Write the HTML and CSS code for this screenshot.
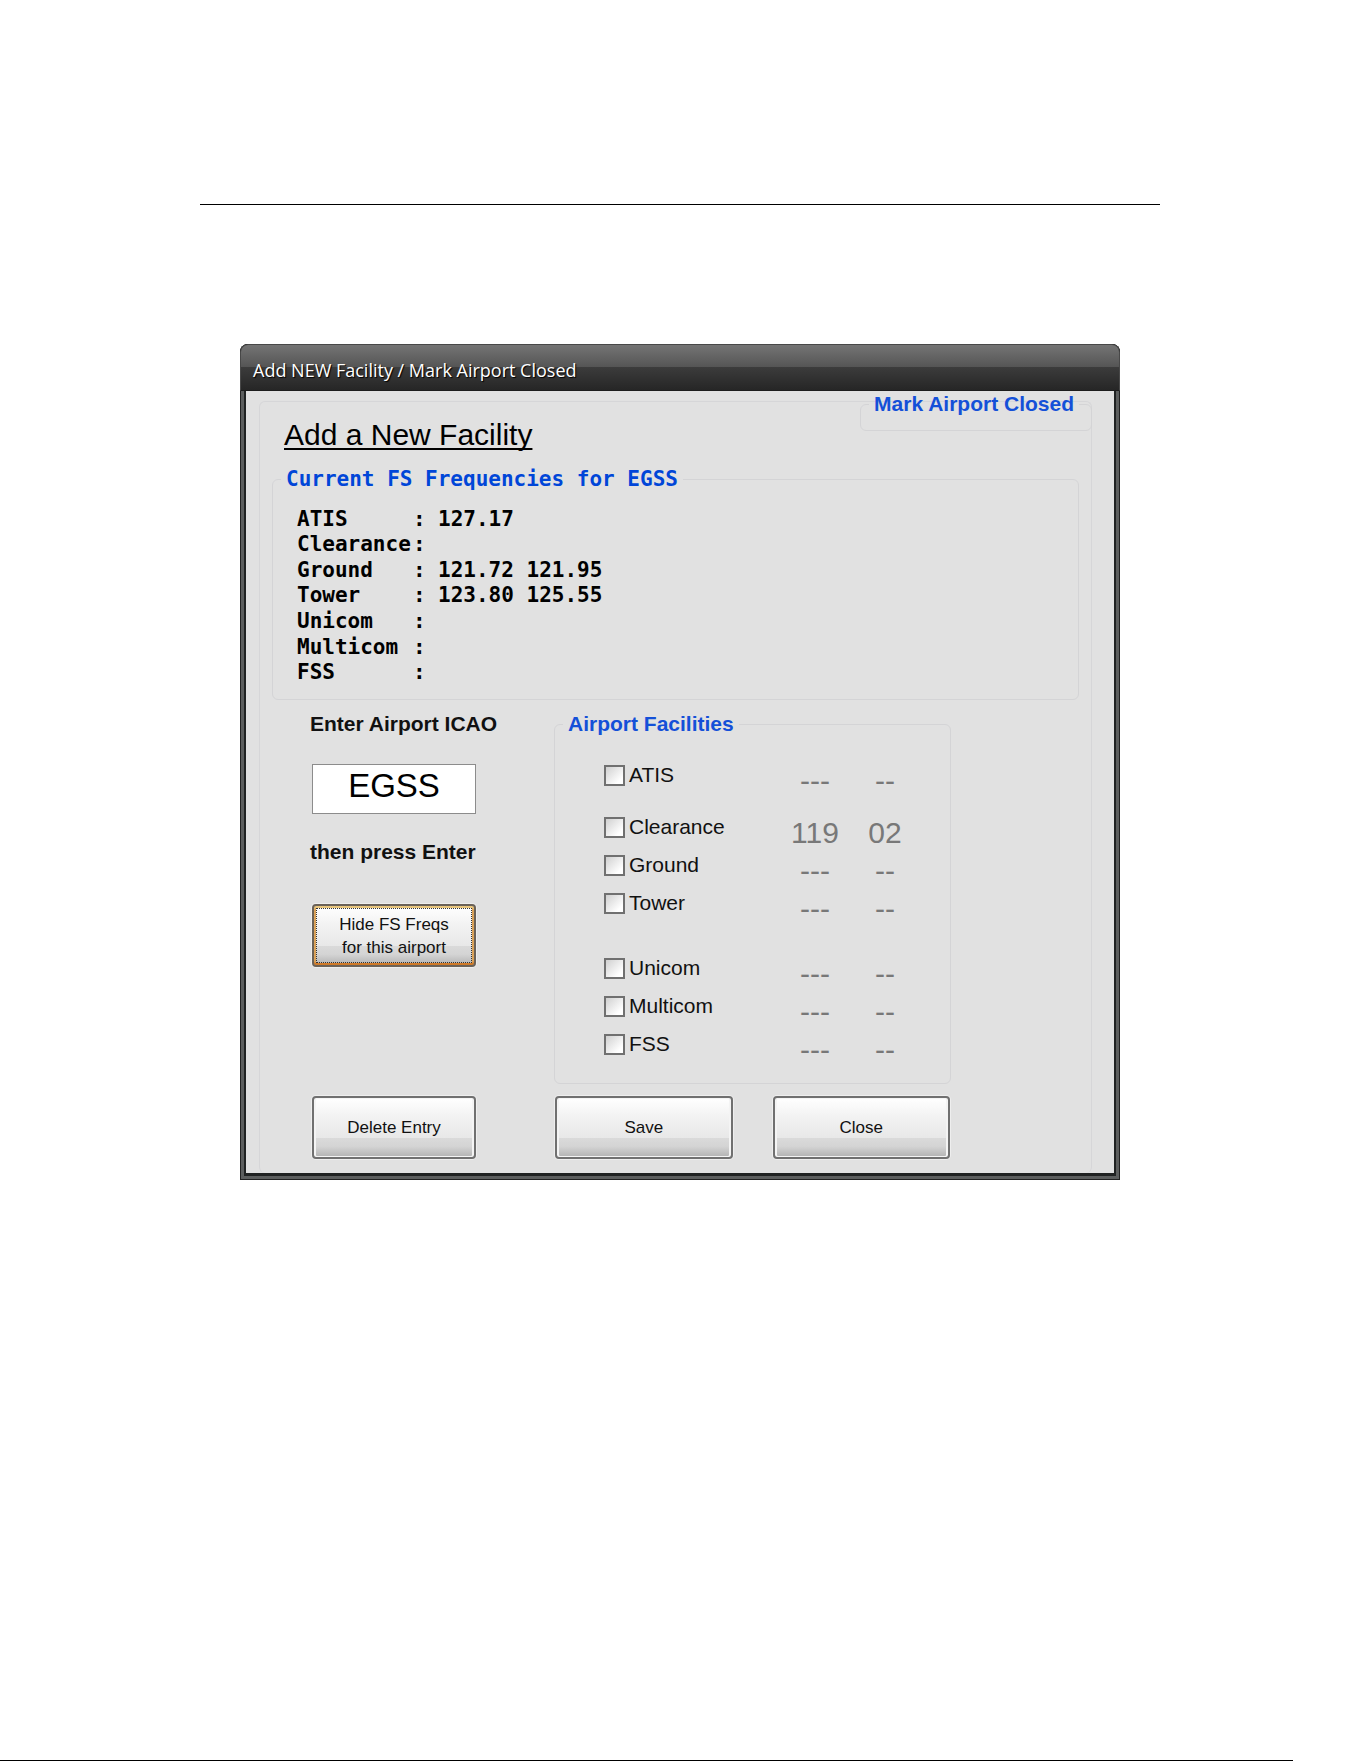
FILE: index.html
```
<!DOCTYPE html>
<html lang="en">
<head>
<meta charset="utf-8">
<title>Add NEW Facility / Mark Airport Closed</title>
<link rel="stylesheet" href="styles.css">
</head>
<body>
<main class="page">
  <hr class="page-rule">
  <section class="window">
    <header class="titlebar">Add NEW Facility / Mark Airport Closed</header>
    <form class="client">
      <div class="panel">
        <fieldset class="group closed-group">
          <legend>Mark Airport Closed</legend>
        </fieldset>
        <h1 class="heading">Add a New Facility</h1>

        <fieldset class="group freq-group">
          <legend>Current FS Frequencies for EGSS</legend>
          <table class="freqs">
            <tr><th scope="row">ATIS</th><td>:</td><td>127.17</td></tr>
            <tr><th scope="row">Clearance</th><td>:</td><td></td></tr>
            <tr><th scope="row">Ground</th><td>:</td><td>121.72 121.95</td></tr>
            <tr><th scope="row">Tower</th><td>:</td><td>123.80 125.55</td></tr>
            <tr><th scope="row">Unicom</th><td>:</td><td></td></tr>
            <tr><th scope="row">Multicom</th><td>:</td><td></td></tr>
            <tr><th scope="row">FSS</th><td>:</td><td></td></tr>
          </table>
        </fieldset>

        <div class="editor">
          <div class="lookup">
            <label class="prompt" for="icao">Enter Airport ICAO</label>
            <input class="icao" id="icao" type="text" value="EGSS">
            <p class="prompt">then press Enter</p>
            <button class="btn btn-focus" type="button">Hide FS Freqs<br>for this airport</button>
          </div>

          <fieldset class="group facilities">
            <legend>Airport Facilities</legend>
            <div class="facility-set">
              <div class="facility"><label><input type="checkbox">ATIS</label><span>---</span><span>--</span></div>
            </div>
            <div class="facility-set">
              <div class="facility"><label><input type="checkbox">Clearance</label><span>119</span><span>02</span></div>
              <div class="facility"><label><input type="checkbox">Ground</label><span>---</span><span>--</span></div>
              <div class="facility"><label><input type="checkbox">Tower</label><span>---</span><span>--</span></div>
            </div>
            <div class="facility-set facility-set-last">
              <div class="facility"><label><input type="checkbox">Unicom</label><span>---</span><span>--</span></div>
              <div class="facility"><label><input type="checkbox">Multicom</label><span>---</span><span>--</span></div>
              <div class="facility"><label><input type="checkbox">FSS</label><span>---</span><span>--</span></div>
            </div>
          </fieldset>

          <div class="delete-action">
            <button class="btn" type="button">Delete Entry</button>
          </div>
          <div class="actions">
            <button class="btn" type="button">Save</button>
            <button class="btn" type="button">Close</button>
          </div>
        </div>
      </div>
    </form>
  </section>
</main>
<footer class="page-end"></footer>
</body>
</html>
```
FILE: styles.css
```
* {
  box-sizing: border-box;
}

body {
  margin: 0;
  min-height: 100vh;
  display: flex;
  flex-direction: column;
  background: #fff;
  color: #111;
  font-family: "Liberation Sans", Arial, sans-serif;
  font-size: 21px;
  line-height: 24px;
}

.page {
  flex: 1;
  padding: 204px 201px 0 200px;
}

.page-rule {
  margin: 0 0 139px;
  border: 0;
  border-top: 1px solid #000;
}

.page-end {
  width: 95%;
  border-top: 1px solid #000;
}

/* Window frame */

.window {
  margin: 0 40px;
  padding-bottom: 7px;
  border-radius: 8px 8px 0 0;
  overflow: hidden;
  background: #202222;
  box-shadow: inset 0 0 0 1px #222, inset 0 0 0 4px #5c5e5e;
}

.titlebar {
  height: 47px;
  padding: 0 12px;
  border: 1px solid #484848;
  border-bottom-color: #1c1c1c;
  border-radius: 8px 8px 0 0;
  background: linear-gradient(#747474, #555 22px, #3c3c3c 22px, #262626);
  color: #fff;
  font-family: "Open Sans", "Noto Sans", sans-serif;
  font-size: 18px;
  font-weight: 500;
  line-height: 50px;
  text-shadow: 1px 1px 1px #000;
}

.client {
  margin: 0 6px;
  padding: 10px 22px 0 13px;
  background: #e1e1e1;
}

.panel {
  position: relative;
  padding: 16px 12px 14px;
  border: 1px solid #d6d6d8;
  border-bottom: 0;
  border-radius: 6px;
}

/* Group boxes */

.group {
  min-width: 0;
  margin: 0;
  padding: 0 8px;
  border: 1px solid #d4d4d6;
  border-radius: 6px;
}

.group legend {
  padding: 0 5px;
  color: #1450d8;
  font-weight: bold;
}

.closed-group {
  position: absolute;
  top: -10px;
  right: -1px;
  height: 39px;
  padding-right: 12px;
  background: linear-gradient(#e1e1e1, #e1e1e1);
}

.heading {
  margin: 0 0 15px;
  padding-left: 12px;
  color: #000;
  font-size: 30px;
  font-weight: normal;
  line-height: 34px;
  text-decoration: underline 2px;
  text-decoration-skip-ink: none;
  text-underline-offset: 3px;
}

.freq-group {
  padding-bottom: 14px;
  font-family: "DejaVu Sans Mono", monospace;
  font-weight: bold;
}

.freq-group legend {
  color: #0046d8;
  line-height: 25px;
}

.freqs {
  height: 179px;
  margin: 14px 0 0 16px;
  border-collapse: collapse;
  color: #000;
}

.freqs th,
.freqs td {
  padding: 0;
  text-align: left;
}

.freqs th {
  width: 116px;
}

.freqs td:nth-child(2) {
  width: 25px;
}

/* Lookup column, facility list and buttons */

.editor {
  display: grid;
  grid-template-columns: 244px minmax(0, 397px);
  row-gap: 12px;
  margin: 12px 0 0 38px;
}

.lookup {
  display: flex;
  flex-direction: column;
  align-items: flex-start;
}

.prompt {
  margin: 0;
  font-weight: bold;
}

.icao {
  width: 164px;
  height: 50px;
  margin: 28px 2px 26px;
  padding: 0 0 7px;
  border: 1px solid #8c8c8c;
  border-radius: 0;
  background: #fff;
  color: #000;
  font-family: inherit;
  font-size: 33px;
  text-align: center;
}

.facilities {
  padding: 0 8px 20px;
}

.facility-set {
  margin: 0 0 14px 41px;
}

.facilities legend + .facility-set {
  margin-top: 20px;
}

.facility-set-last {
  margin-top: 27px;
  margin-bottom: 0;
}

.facility {
  display: grid;
  grid-template-columns: 171px 60px 60px;
  column-gap: 10px;
  align-items: end;
  height: 38px;
}

.facility label {
  display: flex;
  align-items: center;
  gap: 4px;
  height: 38px;
}

.facility input {
  appearance: none;
  width: 21px;
  height: 21px;
  margin: 0;
  border: 2px solid #707070;
  background: linear-gradient(135deg, #d0d0d0, #fff 80%);
}

.facility span {
  color: #787878;
  font-size: 30px;
  line-height: 27px;
  text-align: center;
}

.btn {
  height: 63px;
  padding: 0;
  border: 2px solid #707070;
  border-radius: 4px;
  background: linear-gradient(#fff, #f3f3f3 30%, #e8e8e8 68%, #dadada 68%, #d4d4d4 82%, #b2b2b2);
  box-shadow: 0 0 0 1px #eee, inset 1px 0 0 1px #f4f4f4, inset -1px 0 0 1px #f4f4f4;
  color: #111;
  font-family: inherit;
  font-size: 17px;
  line-height: 23px;
}

.btn-focus {
  width: 164px;
  margin: 40px 2px 0;
  border-color: #6b6258;
  box-shadow: 0 0 0 1px #eee, inset 0 2px 0 #e8c67e, inset 0 -2px 0 #d07a28, inset 2px 0 0 #dba258, inset -2px 0 0 #dba258;
  outline: 1px dotted #333;
  outline-offset: -5px;
}

.delete-action .btn {
  width: 164px;
  margin-left: 2px;
}

.actions {
  display: grid;
  grid-template-columns: 1fr 1fr;
  column-gap: 40px;
  padding: 0 1px;
}
```
